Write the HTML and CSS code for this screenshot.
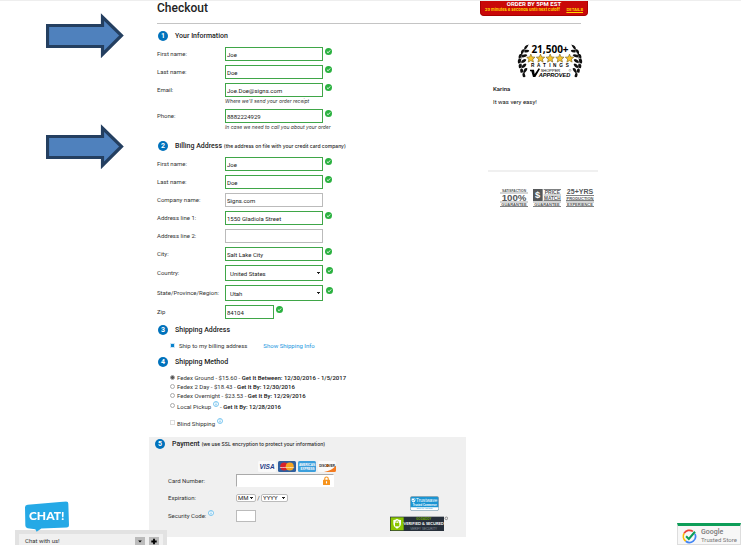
FILE: index.html
```
<!DOCTYPE html>
<html lang="en">

<head>
    <meta charset="UTF-8">
    <meta name="viewport" content="width=device-width, initial-scale=1.0">
    <title>Checkout</title>
    <link rel="stylesheet" href="styles.css">
</head>

<body>
    <!-- shared icons -->
    <svg class="sprite" aria-hidden="true">
        <symbol id="check" viewBox="0 0 14 14">
            <circle cx="7" cy="7" r="7" fill="#2bb140"/>
            <path d="M3.8 7.2 6.2 9.5 10.4 4.8" fill="none" stroke="#fff" stroke-width="1.8"/>
        </symbol>
        <symbol id="arrow" viewBox="0 0 78 46">
            <path d="M1.5 12.5H56.500V4L75.500 22.500 56.500 41.500V33.500H1.500Z" fill="#4f81bd" stroke="#243f60" stroke-width="3.200"/>
        </symbol>
        <symbol id="info" viewBox="0 0 12 12">
            <circle cx="6" cy="6" r="5" fill="#fff" stroke="#45b0ea" stroke-width="1.400"/>
            <path d="M6 5.200V9M6 2.800V4.200" stroke="#2a9fe0" stroke-width="1.500"/>
        </symbol>
        <symbol id="star" viewBox="0 0 20 20">
            <path d="M10 1 12.700 7.200 19.500 7.800 14.300 12.300 15.900 19 10 15.400 4.100 19 5.700 12.300.5 7.800 7.300 7.200Z" fill="#f5c32c" stroke="#6b5310" stroke-width="1.200"/>
        </symbol>
    </svg>

    <div class="page">
        <div class="arrows">
            <svg class="arrow"><use href="#arrow"/></svg>
            <svg class="arrow"><use href="#arrow"/></svg>
        </div>

        <div class="content">
            <header class="header">
                <h1>Checkout</h1>
                <div class="order-by">
                    <strong>ORDER BY 5PM EST</strong>
                    <p><span>29 minutes 6 seconds until next cutoff</span><a href="#">DETAILS</a></p>
                </div>
            </header>

            <div class="columns">
                <form class="checkout">
                    <section class="section">
                        <h2><span class="step">1</span>Your Information</h2>
                        <div class="row">
                            <label for="first-name">First name:</label>
                            <input type="text" id="first-name" class="valid" value="Joe">
                            <svg class="check"><use href="#check"/></svg>
                        </div>
                        <div class="row">
                            <label for="last-name">Last name:</label>
                            <input type="text" id="last-name" class="valid" value="Doe">
                            <svg class="check"><use href="#check"/></svg>
                        </div>
                        <div class="row">
                            <label for="email">Email:</label>
                            <input type="text" id="email" class="valid" value="Joe.Doe@signs.com">
                            <svg class="check"><use href="#check"/></svg>
                            <p class="hint">Where we'll send your order receipt</p>
                        </div>
                        <div class="row">
                            <label for="phone">Phone:</label>
                            <input type="text" id="phone" class="valid" value="8882224929">
                            <svg class="check"><use href="#check"/></svg>
                            <p class="hint">In case we need to call you about your order</p>
                        </div>
                    </section>

                    <section class="section billing">
                        <h2><span class="step">2</span>Billing Address <small>(the address on file with your credit card company)</small></h2>
                        <div class="row">
                            <label for="bill-first">First name:</label>
                            <input type="text" id="bill-first" class="valid" value="Joe">
                            <svg class="check"><use href="#check"/></svg>
                        </div>
                        <div class="row">
                            <label for="bill-last">Last name:</label>
                            <input type="text" id="bill-last" class="valid" value="Doe">
                            <svg class="check"><use href="#check"/></svg>
                        </div>
                        <div class="row">
                            <label for="company">Company name:</label>
                            <input type="text" id="company" value="Signs.com">
                        </div>
                        <div class="row">
                            <label for="address1">Address line 1:</label>
                            <input type="text" id="address1" class="valid" value="1550 Gladiola Street">
                            <svg class="check"><use href="#check"/></svg>
                        </div>
                        <div class="row">
                            <label for="address2">Address line 2:</label>
                            <input type="text" id="address2">
                        </div>
                        <div class="row">
                            <label for="city">City:</label>
                            <input type="text" id="city" class="valid" value="Salt Lake City">
                            <svg class="check"><use href="#check"/></svg>
                        </div>
                        <div class="row tall">
                            <label for="country">Country:</label>
                            <select id="country" class="valid">
                                <option>United States</option>
                            </select>
                            <svg class="check"><use href="#check"/></svg>
                        </div>
                        <div class="row tall">
                            <label for="state">State/Province/Region:</label>
                            <select id="state" class="valid">
                                <option>Utah</option>
                            </select>
                            <svg class="check"><use href="#check"/></svg>
                        </div>
                        <div class="row zip">
                            <label for="zip">Zip</label>
                            <input type="text" id="zip" class="valid" value="84104">
                            <svg class="check"><use href="#check"/></svg>
                        </div>
                    </section>

                    <section class="section shipping">
                        <h2><span class="step">3</span>Shipping Address</h2>
                        <div class="ship-to">
                            <input type="checkbox" id="same-address" checked>
                            <label for="same-address">Ship to my billing address</label>
                            <a href="#">Show Shipping Info</a>
                        </div>
                    </section>

                    <section class="section method">
                        <h2><span class="step">4</span>Shipping Method</h2>
                        <div class="option">
                            <input type="radio" name="method" id="ground" checked>
                            <label for="ground">Fedex Ground - $15.60 - <b>Get It Between: 12/30/2016 - 1/5/2017</b></label>
                        </div>
                        <div class="option">
                            <input type="radio" name="method" id="two-day">
                            <label for="two-day">Fedex 2 Day - $18.43 - <b>Get It By: 12/30/2016</b></label>
                        </div>
                        <div class="option">
                            <input type="radio" name="method" id="overnight">
                            <label for="overnight">Fedex Overnight - $23.53 - <b>Get It By: 12/29/2016</b></label>
                        </div>
                        <div class="option pickup">
                            <input type="radio" name="method" id="pickup">
                            <label for="pickup">Local Pickup <svg class="info"><use href="#info"/></svg> - <b>Get It By: 12/28/2016</b></label>
                        </div>
                        <div class="option blind">
                            <input type="checkbox" id="blind">
                            <label for="blind">Blind Shipping <svg class="info"><use href="#info"/></svg></label>
                        </div>
                    </section>

                    <section class="payment">
                        <h2><span class="step">5</span>Payment <small>(we use SSL encryption to protect your information)</small></h2>
                        <div class="payment-body">
                            <div class="payment-fields">
                                <div class="cards">
                                    <svg viewBox="0 0 36 22"><rect width="36" height="22" rx="3" fill="#fafafa"/><text x="18" y="16" text-anchor="middle" class="logo-text" font-size="13" font-style="italic" fill="#1f3a86">VISA</text></svg>
                                    <svg viewBox="0 0 36 22"><rect width="36" height="22" rx="3" fill="#2f5f9e"/><circle cx="12.500" cy="11" r="8" fill="#d8232a"/><circle cx="23.500" cy="11" r="8" fill="#f5a623"/><text x="18" y="13" text-anchor="middle" class="logo-text" font-size="5" fill="#fff">MasterCard</text></svg>
                                    <svg viewBox="0 0 36 22"><rect width="36" height="22" rx="3" fill="#3c9fdc"/><text x="18" y="10" text-anchor="middle" class="logo-text" font-size="6" fill="#fff">AMERICAN</text><text x="19" y="17" text-anchor="middle" class="logo-text" font-size="6" fill="#fff">EXPRESS</text></svg>
                                    <svg viewBox="0 0 36 22"><rect width="36" height="22" rx="3" fill="#fafafa"/><path d="M12 22Q28 19 36 9V19Q36 22 33 22Z" fill="#f47b20"/><circle cx="19" cy="9" r="3" fill="#f47b20"/><text x="18" y="11" text-anchor="middle" class="logo-text" font-size="6" fill="#222">DISCOVER</text></svg>
                                </div>
                                <div class="row card-row">
                                    <label for="card">Card Number:</label>
                                    <span class="card-input">
                                        <input type="text" id="card">
                                        <svg class="lock" viewBox="0 0 14 18"><path d="M3.500 8V5.500a3.500 3.500 0 0 1 7 0V8" fill="none" stroke="#f7941d" stroke-width="2.200"/><rect y="7.500" width="14" height="10.500" rx="1" fill="#f7941d"/><path d="M7 10.500V15" stroke="#fff" stroke-width="2.200"/></svg>
                                    </span>
                                </div>
                                <div class="row expiry">
                                    <label for="month">Expiration:</label>
                                    <select id="month"><option>MM</option></select>
                                    <span>/</span>
                                    <select id="year" aria-label="Expiration year"><option>YYYY</option></select>
                                </div>
                                <div class="row security">
                                    <label for="cvv">Security Code: <svg class="info"><use href="#info"/></svg></label>
                                    <input type="text" id="cvv">
                                </div>
                            </div>
                            <div class="trust">
                                <svg class="trustwave" viewBox="0 0 87 44">
                                    <rect x="1" y="1" width="85" height="42" rx="5" fill="#1b95d3" stroke="#8a9aa3" stroke-width="2"/>
                                    <path d="M2 33H85V38Q85 42 81 42H6Q2 42 2 38Z" fill="#fff"/>
                                    <path d="M5 7H16V12Q16 17 10.500 19 5 17 5 12Z" fill="#fff"/><path d="M7 12 10 15 15 8" fill="none" stroke="#1b95d3" stroke-width="2"/>
                                    <text x="50" y="18" text-anchor="middle" class="plain-text" font-size="14" fill="#fff">Trustwave</text>
                                    <text x="44" y="29" text-anchor="middle" class="logo-text" font-size="8" fill="#fff">Trusted Commerce</text>
                                    <text x="44" y="40" text-anchor="middle" class="plain-text" font-size="7" fill="#1b95d3">Click to Validate</text>
                                </svg>
                                <svg class="godaddy" viewBox="0 0 174 45">
                                    <rect y="2" width="162" height="43" fill="#262f3a"/>
                                    <rect x="2" y="4" width="39" height="39" fill="#8ac600"/>
                                    <path d="M21 8Q26 12 33 12V22Q33 33 21 38 10 33 10 22V12Q16 12 21 8Z" fill="#fff"/>
                                    <path d="M18 22V18a3.500 3.500 0 0 1 7 0V22" fill="none" stroke="#8ac600" stroke-width="2.500"/><rect x="15" y="21" width="13" height="10" fill="#8ac600"/>
                                    <text x="101" y="13" text-anchor="middle" class="logo-text" font-size="9" fill="#70a800">GODADDY</text>
                                    <text x="101" y="28" text-anchor="middle" class="seal-text" font-size="12" fill="#fff">VERIFIED &amp; SECURED</text>
                                    <text x="101" y="41" text-anchor="middle" class="plain-text" font-size="9" fill="#8b949d">VERIFY SECURITY</text>
                                    <circle cx="169" cy="7" r="4" fill="none" stroke="#666" stroke-width="2"/>
                                </svg>
                            </div>
                        </div>
                    </section>
                </form>

                <aside class="sidebar">
                    <svg class="ratings" viewBox="0 0 198 106">
                        <g fill="none" stroke="#111" stroke-width="1.500">
                            <path d="M34 4Q-8 50 25 100"/>
                            <path d="M164 4Q206 50 173 100"/>
                        </g>
                        <g id="laurel" fill="#111">
                            <path d="M34 4Q21 5 21 19 30 17 34 4ZM22 17Q10 18 12 33 21 30 22 17ZM15 31Q3 30 5 46 15 45 15 31ZM12 47Q0 43 3 60 13 62 12 47ZM14 63Q2 58 6 74 16 77 14 63ZM17 77Q6 73 11 88 22 90 17 77ZM22 89Q13 87 18 101 29 104 22 89Z"/>
                            <path d="M22 20Q36 17 37 23 31 29 22 27ZM15 36Q28 29 31 36 27 43 15 42ZM13 53Q23 43 28 49 26 57 13 59ZM14 69Q22 57 28 62 28 70 16 75ZM19 84Q23 70 31 75 31 84 20 91Z"/>
                        </g>
                        <use href="#laurel" transform="matrix(-1 0 0 1 198 0)"/>
                        <text x="99" y="28" text-anchor="middle" class="display-text" font-size="30">21,500+</text>
                        <use href="#star" x="28" y="31" width="27" height="27"/>
                        <use href="#star" x="57" y="31" width="27" height="27"/>
                        <use href="#star" x="86" y="31" width="27" height="27"/>
                        <use href="#star" x="115" y="31" width="27" height="27"/>
                        <use href="#star" x="144" y="31" width="27" height="27"/>
                        <text y="71" class="logo-text" font-size="14"><tspan x="42">R</tspan><tspan x="60">A</tspan><tspan x="78">T</tspan><tspan x="97">I</tspan><tspan x="108">N</tspan><tspan x="127">G</tspan><tspan x="146">S</tspan></text>
                        <path d="M39 79H51L53 92 65 75 69 77 55 101H48L43 84H39Z"/>
                        <text x="71" y="85" class="plain-text" font-size="12">SHOPPER</text>
                        <text x="65" y="101" class="logo-text" font-size="17" font-style="italic">APPROVED</text>
                        <circle cx="159" cy="81" r="3" fill="none" stroke="#444"/>
                    </svg>
                    <div class="review">
                        <h3>Karina</h3>
                        <p>It was very easy!</p>
                    </div>
                    <div class="guarantees">
                        <svg viewBox="0 0 84 54" fill="#55585a">
                            <text x="42" y="9" text-anchor="middle" class="logo-text" font-size="10">SATISFACTION</text>
                            <path d="M0 11H84V13H0ZM0 38H84V40H0ZM0 52H84V54H0Z"/>
                            <text x="42" y="35" text-anchor="middle" class="logo-text" font-size="29">100%</text>
                            <text x="42" y="50" text-anchor="middle" class="logo-text" font-size="12">GUARANTEE</text>
                        </svg>
                        <svg viewBox="0 0 84 54" fill="#55585a">
                            <path d="M0 0H29V36H0ZM32 0H84V2H32ZM32 17H84V19H32ZM32 34H84V36H32ZM0 38H84V40H0ZM0 52H84V54H0Z"/>
                            <text x="14" y="28" text-anchor="middle" class="logo-text" font-size="28" fill="#fff">$</text>
                            <text x="58" y="15" text-anchor="middle" class="logo-text" font-size="15">PRICE</text>
                            <text x="58" y="32" text-anchor="middle" class="logo-text" font-size="14">MATCH</text>
                            <text x="42" y="50" text-anchor="middle" class="logo-text" font-size="12">GUARANTEE</text>
                        </svg>
                        <svg viewBox="0 0 84 54" fill="#55585a">
                            <text x="42" y="16" text-anchor="middle" class="logo-text" font-size="21">25+YRS</text>
                            <path d="M0 19H84V21H0ZM0 34H84V36H0ZM0 38H84V40H0ZM0 52H84V54H0Z"/>
                            <text x="42" y="32" text-anchor="middle" class="logo-text" font-size="12">PRODUCTION</text>
                            <text x="42" y="50" text-anchor="middle" class="logo-text" font-size="12">EXPERIENCE</text>
                        </svg>
                    </div>
                </aside>
            </div>
        </div>
    </div>

    <div class="chat">
        <svg class="bubble" viewBox="0 0 132 92">
            <path d="M8 11 122 1Q130 0 130 8L132 72Q132 79 125 79L49 82 35 92 31 84 8 81Q1 80 1 73L0 18Q0 12 8 11Z" fill="#25a9e6"/>
            <text x="65" y="56" text-anchor="middle" class="chat-text" font-size="36" fill="#fff">CHAT!</text>
        </svg>
        <div class="chat-bar">
            <span>Chat with us!</span>
            <button type="button" aria-label="Minimize"><svg viewBox="0 0 10 10"><path d="M3 4H7L5 6Z"/></svg></button>
            <button type="button" aria-label="Expand"><svg viewBox="0 0 10 10"><path d="M4 2H6V4H8V6H6V8H4V6H2V4H4Z"/></svg></button>
        </div>
    </div>

    <div class="google">
        <svg class="google-mark" viewBox="0 0 44 44">
            <g fill="none" stroke-width="5">
                <path d="M6 13A18 18 0 0 1 32 7" stroke="#ea4335"/>
                <path d="M11 36A18 18 0 0 1 6 13" stroke="#fbbc05"/>
                <path d="M38 14A18 18 0 0 1 11 36" stroke="#4285f4"/>
                <path d="M12 21 20 29 38 8" stroke="#0d9d58" stroke-width="6"/>
            </g>
        </svg>
        <p><strong>Google</strong>Trusted Store</p>
    </div>
</body>

</html>
```
FILE: styles.css
```
* {
    box-sizing: border-box;
}

body {
    margin: 0;
    min-height: 100vh;
    font-family: Roboto, "Liberation Sans", sans-serif;
    font-size: 6px;
    line-height: 8px;
    color: #333;
    background-color: #fff;
    border-top: 1px solid #eee;
}

h1,
h2,
h3,
p {
    margin: 0;
}

svg {
    display: block;
    flex: none;
}

.sprite {
    position: absolute;
    width: 0;
    height: 0;
}

.logo-text {
    font-family: "Liberation Sans", sans-serif;
    font-weight: bold;
}

.plain-text {
    font-family: "Liberation Sans", sans-serif;
}

.display-text {
    font-family: "Open Sans", sans-serif;
    font-weight: bold;
}

.seal-text {
    font-family: Lato, sans-serif;
    font-weight: bold;
}

.chat-text {
    font-family: Lato, sans-serif;
    font-weight: 900;
}

/* page layout */
.page {
    display: flex;
}

.arrows {
    display: flex;
    flex-direction: column;
    gap: 65px;
    flex: 0 0 149px;
    padding: 12px 0 0 46px;
}

.arrow {
    width: 78px;
    height: 46px;
}

.content {
    flex: 0 1 449px;
    min-width: 0;
}

.columns {
    display: flex;
}

.header {
    display: flex;
    justify-content: space-between;
    height: 23px;
    margin: 0 17px 0 8px;
    border-bottom: 1px solid #c4c4c4;
}

.header h1 {
    font-size: 12px;
    font-weight: 500;
    line-height: 14px;
    color: #222;
}

.order-by {
    width: 108px;
    height: 15px;
    margin-right: -7px;
    line-height: 6px;
    text-align: center;
    color: #fff;
    background-color: #c90808;
    border: 1px solid #a80000;
    border-top: 0;
    border-radius: 0 0 4px 4px;
}

.order-by strong {
    display: block;
    font-size: 6px;
}

.order-by p {
    display: flex;
    justify-content: space-between;
    padding: 0 4px;
    font-family: Inter, sans-serif;
    font-size: 4px;
    font-weight: bold;
    color: #ffd800;
    white-space: nowrap;
}

.order-by a {
    color: #ffd800;
}

/* form */
.checkout {
    flex: 0 1 317px;
    min-width: 0;
}

.section {
    padding: 6px 0 0 8px;
}

h2 {
    display: flex;
    align-items: center;
    height: 12px;
    margin-bottom: 5px;
    font-size: 7px;
    font-weight: 500;
    color: #222;
    white-space: pre;
}

h2 small {
    font-family: Inter, sans-serif;
    font-size: 5px;
    font-weight: 500;
    line-height: 6px;
}

.step {
    width: 10px;
    height: 10px;
    margin: 0 7px 0 1px;
    border-radius: 50%;
    font-size: 7px;
    font-weight: bold;
    line-height: 10px;
    text-align: center;
    color: #fff;
    background-color: #0072bc;
}

.row {
    display: grid;
    grid-template-columns: 68px 98px auto;
    justify-content: start;
    margin-bottom: 4px;
    line-height: 14px;
    white-space: nowrap;
}

input,
select {
    margin: 0;
    font-family: inherit;
    font-size: 6px;
    color: #222;
    background-color: #fff;
    border: 1px solid #bbb;
    border-radius: 0;
    outline: none;
}

input[type="text"] {
    width: 100%;
    height: 14px;
    padding: 0 1px;
}

select {
    appearance: none;
    height: 16px;
    padding: 0 4px;
    background-image: linear-gradient(#222, #222), linear-gradient(#222, #222);
    background-repeat: no-repeat;
    background-position: right 2px top 6px, right 3px top 7px;
    background-size: 3px 1px, 1px 1px;
}

input.valid,
select.valid {
    border-color: #3fa648;
}

.check {
    width: 7px;
    height: 7px;
    margin: 1px 0 0 2px;
}

.hint {
    grid-column: 2 / 4;
    font-family: Inter, sans-serif;
    font-size: 5px;
    font-style: italic;
    line-height: 8px;
}

.billing {
    padding-top: 5px;
}

.tall {
    line-height: 16px;
}

.tall .check {
    margin: 2px 0 0 3px;
}

.zip {
    grid-template-columns: 68px 49px auto;
}

.shipping {
    padding-top: 1px;
}

.ship-to,
.option {
    display: flex;
    align-items: center;
    height: 9px;
    padding-left: 13px;
    white-space: nowrap;
}

.ship-to input,
.option input {
    appearance: none;
    width: 5px;
    height: 5px;
    margin-right: 2px;
}

.ship-to input {
    border: 1px solid #cfe6f5;
    background-color: #0a83cc;
    margin-right: 4px;
}

.ship-to a {
    margin-left: 16px;
    color: #1a96e0;
    text-decoration: none;
}

.option input[type="radio"] {
    border-radius: 50%;
    border-color: #aaa;
}

.option input:checked {
    background-color: #555;
}

.option input[type="checkbox"] {
    border-color: #ddd;
}

.option b {
    font-weight: 500;
    color: #111;
}

.pickup {
    height: 11px;
}

.blind {
    margin-top: 7px;
}

.info {
    display: inline-block;
    width: 6px;
    height: 6px;
    vertical-align: 2px;
}

/* payment */
.payment {
    margin-top: 10px;
    padding: 1px 0 15px;
    background-color: #f0f0f0;
}

.payment h2 {
    padding-left: 6px;
}

.payment .step {
    margin: 0 7px 0 0;
}

.payment-body {
    display: flex;
    justify-content: space-between;
    align-items: flex-end;
    padding: 6px 18px 0 19px;
}

.cards {
    display: flex;
    gap: 2px;
    margin: 0 0 2px 90px;
}

.cards svg {
    width: 18px;
    height: 11px;
}

.card-input {
    position: relative;
}

.card-input input[type="text"] {
    display: block;
    height: 13px;
    border-color: #aaa #fff #fff #aaa;
}

.lock {
    position: absolute;
    top: 2px;
    right: 4px;
    width: 7px;
    height: 9px;
}

.row.card-row {
    margin-bottom: 7px;
    line-height: 13px;
}

.row.expiry {
    grid-template-columns: 68px 20px 5px 27px;
    line-height: 8px;
    margin-bottom: 8px;
}

.expiry span {
    text-align: center;
}

.expiry select {
    height: 8px;
    padding: 0 1px;
    line-height: 6px;
    border-radius: 2px;
    background-position: right 2px top 2px, right 3px top 3px;
}

.row.security {
    grid-template-columns: 68px 20px;
    margin-bottom: 0;
    line-height: 12px;
}

.security input[type="text"] {
    height: 12px;
}

.trust {
    display: flex;
    flex-direction: column;
    align-items: flex-start;
    gap: 5px;
    margin-bottom: -9px;
}

.trustwave {
    width: 29px;
    height: 15px;
    margin-left: 20px;
}

.godaddy {
    width: 58px;
    height: 15px;
}

/* sidebar */
.sidebar {
    flex: 0 0 132px;
    padding: 19px 0 0 22px;
}

.ratings {
    width: 66px;
    height: 36px;
    margin-left: 29px;
}

.review {
    padding: 6px 0 64px 5px;
    border-bottom: 2px solid #f0f0f0;
    color: #111;
}

.review h3 {
    margin-bottom: 5px;
    font-size: 6px;
    font-weight: 500;
}

.guarantees {
    display: flex;
    gap: 5px;
    padding: 17px 0 0 12px;
}

.guarantees svg {
    width: 28px;
    height: 18px;
}

/* floating widgets */
.chat {
    position: fixed;
    left: 15px;
    bottom: 0;
    width: 152px;
}

.bubble {
    position: relative;
    width: 44px;
    height: 31px;
    margin: 0 0 -2px 10px;
}

.chat-bar {
    display: flex;
    align-items: center;
    gap: 4px;
    height: 15px;
    padding: 3px 4px 0 6px;
    border: solid #e2e2e2;
    border-width: 4px 4px 0;
    background-color: #f0f0f0;
}

.chat-bar span {
    flex: 1;
}

.chat-bar button {
    width: 10px;
    height: 9px;
    padding: 0;
    border: 0;
    background-color: #bbb;
}

.chat-bar svg {
    width: 10px;
    height: 9px;
}

.google {
    position: fixed;
    right: 0;
    bottom: 0;
    display: flex;
    align-items: center;
    gap: 4px;
    width: 64px;
    height: 22px;
    padding: 2px 0 0 4px;
    border: 1px solid #ddd;
    border-top: 3px solid #0d9d58;
    background-color: #f7f7f7;
    color: #777;
    white-space: nowrap;
}

.google-mark {
    width: 15px;
    height: 15px;
}

.google strong {
    display: block;
    font-size: 7px;
    font-weight: 500;
}
```
